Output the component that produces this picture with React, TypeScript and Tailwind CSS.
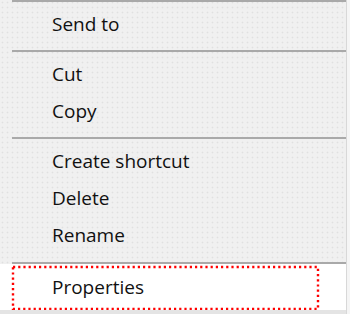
import React from "react";

const Sep = ({ mt = "mt-[4px]", mb = "mb-[7px]" }: { mt?: string; mb?: string }) => (
  <div className={`${mt} ${mb} ml-[12px] h-[2px] bg-[#a9a9a9]`} />
);

const Item = ({ label }: { label: string }) => (
  <div className="h-[37px] pl-[52px] pb-[5px] leading-[31px] text-[19px] text-[#111]">{label}</div>
);

export default function App() {
  return (
    <div
      className="w-[350px] h-[314px] overflow-hidden flex bg-[#f0f0f0]"
      style={{ fontFamily: '"Open Sans", "Noto Sans", sans-serif' }}
    >
      <div className="w-[346px] flex flex-col bg-[#f0f0f0] bg-[radial-gradient(circle,#e0e0e0_0.8px,transparent_1.1px)] bg-[length:5px_5px]">
        <Sep mt="mt-0" />
        <Item label="Send to" />
        <Sep />
        <Item label="Cut" />
        <Item label="Copy" />
        <Sep />
        <Item label="Create shortcut" />
        <Item label="Delete" />
        <Item label="Rename" />
        <Sep mb="mb-0" mt="mt-[5px]" />
        <div className="relative h-[46px] bg-white pl-[52px] pt-[8px] leading-[31px] text-[19px] text-[#111]">
          Properties
          <svg className="absolute left-0 top-0" width="346" height="46">
            <rect
              x="13"
              y="3"
              width="305"
              height="42"
              fill="none"
              stroke="#ff0000"
              strokeWidth="2.4"
              strokeDasharray="2.2 3"
            />
          </svg>
        </div>
        <div className="flex-1 bg-[#e4e4e4]" />
      </div>
      <div className="w-[4px] border-l border-[#d8d8d8] bg-[#f5f5f5]" />
    </div>
  );
}
